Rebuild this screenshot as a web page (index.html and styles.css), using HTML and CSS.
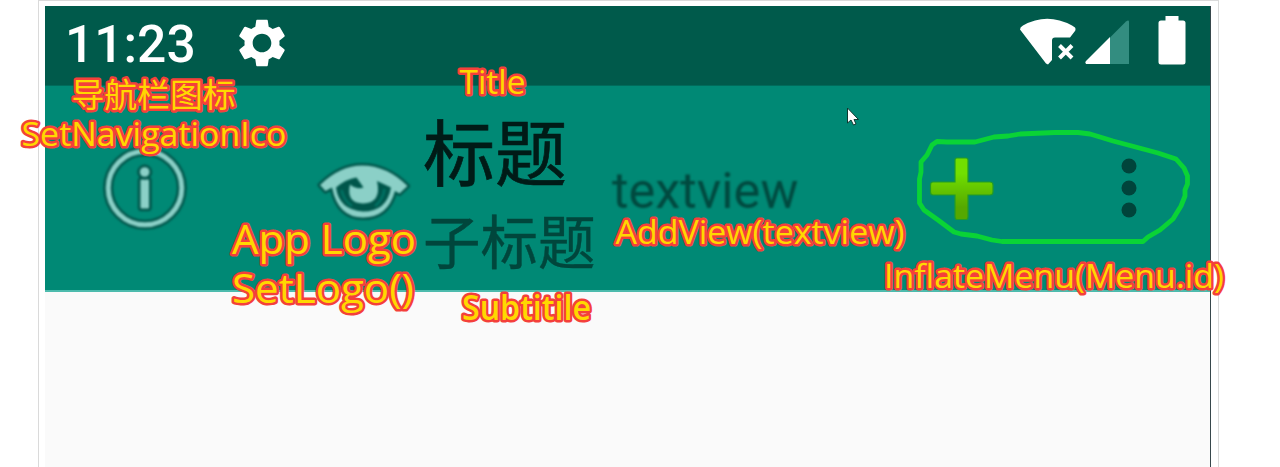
FILE: index.html
```html
<!DOCTYPE html>
<html lang="zh-CN">
<head>
<meta charset="utf-8">
<title>Toolbar</title>
<link rel="stylesheet" href="styles.css">
</head>
<body>
<main class="frame">
  <section class="phone">
    <header class="status">
      <span class="clock">11:23</span>
      <svg class="gear" width="56" height="56" viewBox="0 0 24 24"><path fill="#fff" d="M19.43 12.98c.04-.32.07-.64.07-.98s-.03-.66-.07-.98l2.11-1.65c.19-.15.24-.42.12-.64l-2-3.46c-.12-.22-.39-.3-.61-.22l-2.49 1c-.52-.4-1.08-.73-1.69-.98l-.38-2.65C14.46 2.18 14.25 2 14 2h-4c-.25 0-.46.18-.49.42l-.38 2.65c-.61.25-1.17.59-1.69.98l-2.49-1c-.23-.09-.49 0-.61.22l-2 3.46c-.13.22-.07.49.12.64l2.11 1.65c-.04.32-.07.65-.07.98s.03.66.07.98l-2.11 1.65c-.19.15-.24.42-.12.64l2 3.46c.12.22.39.3.61.22l2.49-1c.52.4 1.08.73 1.69.98l.38 2.65c.03.24.24.42.49.42h4c.25 0 .46-.18.49-.42l.38-2.65c.61-.25 1.17-.59 1.69-.98l2.49 1c.23.09.49 0 .61-.22l2-3.46c.12-.22.07-.49-.12-.64l-2.11-1.65zM12 16c-2.21 0-4-1.79-4-4s1.79-4 4-4 4 1.79 4 4-1.790 4-4 4z"/></svg>
      <svg class="signals" width="170" height="52" viewBox="1018 14 170 52">
        <path fill="#fff" d="M1020 29.500Q1020 27 1023 25.500Q1047 12 1072 25.500L1075 27.500Q1076 29 1075 31L1070 37.500H1055Q1052 37.500 1052 40.500V60L1048 64.500L1046 63.500Z"/>
        <path d="M1059.500 45.500l12.500 12.500M1072 45.500l-12.500 12.500" stroke="#fff" stroke-width="4"/>
        <path fill="#338d80" d="M1110 37.500L1126 21.500Q1129 19.500 1129 22V64H1110Z"/>
        <path fill="#fff" d="M1110 37V64H1086Q1084.500 62 1086 61Z"/>
        <path fill="#fff" d="M1165.500 16h13v4.500h4.500q2.500 0 2.500 2.500v39q0 2.500-2.500 2.500h-22q-2.500 0-2.500-2.500v-39q0-2.500 2.500-2.500h4.500Z"/>
      </svg>
    </header>
    <div class="toolbar">
      <svg class="nav" width="90" height="90" viewBox="100 143 90 90">
        <g fill="none"><circle cx="145" cy="188" r="36.800" stroke="#00564b" stroke-width="10"/><circle cx="145" cy="188" r="36.800" stroke="#8bd0c7" stroke-width="5"/></g>
        <g fill="#8bd0c7" stroke="#00564b" stroke-width="5.500" paint-order="stroke"><rect x="140.500" y="179.500" width="8.500" height="29" rx="1"/><circle cx="144.700" cy="172" r="4.800"/></g>
      </svg>
      <svg class="eye" width="98" height="66" viewBox="315 158 98 66">
        <path fill="#8bd0c7" stroke="#00564b" stroke-width="5" stroke-linejoin="round" paint-order="stroke" d="M320 185Q340 165.500 362 165.500Q387 165.500 407.500 186L399.500 193.500L395 191Q388 217.500 363 217.500Q338 217.500 332 187.500L325.500 191Z"/>
        <path fill="#00564b" d="M336 187.500Q346 179 356.500 177.500L363.500 187.500Q357 190 350 184.500Q346 203 363 203.500Q382 203 377 181L391 187.500Q387 211.500 363 211.500Q339 210 336 187.500Z"/>
        <path d="M341.500 190Q344 201 352 206M384.500 189Q383 200 375 206" fill="none" stroke="#007465" stroke-width="2.500"/>
      </svg>
      <div class="titles">
        <div class="title">标题</div>
        <div class="subtitle">子标题</div>
      </div>
      <span class="custom">textview</span>
      <svg class="plus" width="70" height="70" viewBox="927 153 70 70">
        <defs><linearGradient id="lime" x1="0" y1="0" x2="0" y2="1"><stop offset=".25" stop-color="#72df00"/><stop offset=".8" stop-color="#55a800"/></linearGradient></defs>
        <path fill="url(#lime)" stroke="#239c25" stroke-width="1.200" d="M957 158h9q2 0 2 2v22h22q3 0 3 3v7q0 3-3 3h-22v22q0 2.500-2 2.500h-9q-2 0-2-2.500v-22h-22q-2.500 0-2.500-3v-7q0-3 2.500-3h22v-22q0-2 2-2Z"/>
      </svg>
      <svg class="more" width="20" height="66" viewBox="0 0 20 66"><g fill="#00443b"><circle cx="10" cy="11" r="7.500"/><circle cx="10" cy="33" r="7.500"/><circle cx="10" cy="55" r="7.500"/></g></svg>
    </div>
    <div class="content"></div>
  </section>
</main>
<svg class="notes" width="1280" height="467" viewBox="0 0 1280 467">
  <path class="lasso" d="M937 141.500L932 145L927 155L921 162V172L919.500 179V203L924 210L938 220L954 232L961 234L977 236L992 240L1002 241.500H1143L1148 237L1160 230L1173 219L1181 206L1185 196V190L1187.500 184V176L1184 168L1176 159L1158 153L1130 145.500L1113 141L1100 137L1090 134L1078 132.500H1055L1020 134L1008 136L994 137L975 142H947Z"/>
  <g class="label">
    <text class="cjk" x="71.500" y="106.500" textLength="164">导航栏图标</text>
    <text x="21.500" y="145.500" textLength="265" lengthAdjust="spacingAndGlyphs">SetNavigationIco</text>
    <text x="459.500" y="94" textLength="66" lengthAdjust="spacingAndGlyphs">Title</text>
    <text class="large" x="232" y="254.300" textLength="184" lengthAdjust="spacingAndGlyphs">App Logo</text>
    <text class="large" x="232" y="302.800" textLength="182" lengthAdjust="spacingAndGlyphs">SetLogo()</text>
    <text class="strong" x="462" y="319.500" textLength="129" lengthAdjust="spacingAndGlyphs">Subtitile</text>
    <text x="615.500" y="243.700" textLength="289" lengthAdjust="spacingAndGlyphs">AddView(textview)</text>
    <text x="884" y="287.700" textLength="340" lengthAdjust="spacingAndGlyphs">InflateMenu(Menu.id)</text>
  </g>
  <path d="M847.500 108v15l3.500-3 2.500 5 2.500-1-2-4.500h4.500Z" fill="#fff" stroke="#103830" stroke-width="1"/>
</svg>
</body>
</html>
```
FILE: styles.css
```css
* { box-sizing: border-box; }
body { margin: 0; height: 467px; overflow: hidden; background: #fff; position: relative; }
.frame {
  width: 1181px;
  height: 467px;
  margin-left: 38px;
  padding: 5px 7px 0 6px;
  border: 1px solid #dadada;
  border-bottom: 0;
}
.phone {
  height: 461px;
  display: flex;
  flex-direction: column;
  border-right: 1px solid #37474b;
  background: #fafafa;
}
.status {
  height: 80px;
  background: #005a4b;
  display: flex;
  align-items: flex-start;
  border-bottom: 1px solid #006b5b;
}
.clock {
  width: 130px;
  margin: 8px 0 0 20px;
  color: #fff;
  font: 500 51.500px/61px Roboto, sans-serif;
  white-space: nowrap;
  filter: blur(.6px);
}
.gear { margin: 9px 0 0 39px; filter: blur(.6px); }
.signals { margin: 8px 22px 0 auto; filter: blur(.4px); }
.toolbar {
  height: 206px;
  display: flex;
  align-items: flex-start;
  background: #008975;
  border-bottom: 2px solid #4dbbad;
}
.nav { margin: 57px 0 0 55px; filter: blur(.9px); }
.eye { margin: 72px 0 0 125px; filter: blur(.8px); }
.titles {
  width: 188px;
  margin: 21px 0 0 10px;
  font-family: "Noto Sans CJK SC", sans-serif;
  white-space: nowrap;
  filter: blur(.7px);
}
.title { font-size: 72px; line-height: 84px; color: #001b17; -webkit-text-stroke: .7px #001b17; }
.subtitle { font-size: 57.500px; line-height: 97px; color: #00463c; -webkit-text-stroke: .4px #00463c; }
.custom {
  width: 190px;
  margin: 74px 0 0 1px;
  color: #00493f;
  font: 400 50.500px/61px Roboto, sans-serif;
  filter: blur(.8px);
}
.plus { margin: 67px 0 0 auto; filter: blur(.5px); }
.more { margin: 69px 71px 0 122px; filter: blur(.7px); }
.content { flex: 1; }
.notes { position: absolute; left: 0; top: 0; }
.lasso { fill: none; stroke: #0ad336; stroke-width: 4.800px; stroke-linejoin: round; }
.label {
  font: 500 33.500px "Open Sans", "Noto Sans", sans-serif;
  fill: #ffd800;
  stroke: #f4403a;
  stroke-width: 5px;
  stroke-linejoin: round;
  paint-order: stroke;
}
.label text { white-space: pre; }
.label .cjk { font: 400 32.800px "Noto Sans CJK SC", sans-serif; }
.label .large { font-size: 41px; }
.label .strong { font-weight: 600; }
```
